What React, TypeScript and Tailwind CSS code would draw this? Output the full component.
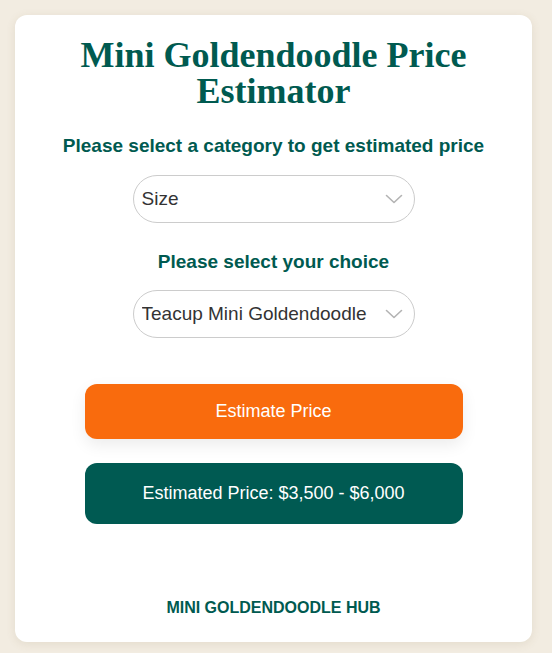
import { useState } from 'react'

const sizeChoices = [
  'Teacup Mini Goldendoodle',
  'Toy Mini Goldendoodle',
  'Petite Mini Goldendoodle',
  'Mini Goldendoodle',
]

function Chevron() {
  return (
    <svg width="18" height="10" viewBox="0 0 18 10" fill="none" className="pointer-events-none absolute right-[12px] top-1/2 -translate-y-1/2">
      <path d="M1.5 1.5 L9 8.5 L16.5 1.5" stroke="#b3b3b3" strokeWidth="1.6" strokeLinecap="round" strokeLinejoin="round" />
    </svg>
  )
}

function PillSelect({ value, options, onChange }: { value: string; options: string[]; onChange: (v: string) => void }) {
  return (
    <div className="relative w-[282px] h-[48px]">
      <select
        value={value}
        onChange={(e) => onChange(e.target.value)}
        className="appearance-none w-full h-full rounded-full border border-[#cccccc] bg-white pl-[8px] pr-[40px] text-[19px] text-[#333333] outline-none font-['Liberation_Sans',Arial,sans-serif]"
      >
        {options.map((o) => (
          <option key={o} value={o}>
            {o}
          </option>
        ))}
      </select>
      <Chevron />
    </div>
  )
}

export default function App() {
  const [category, setCategory] = useState('Size')
  const [choice, setChoice] = useState(sizeChoices[0])

  return (
    <div className="min-h-[653px] bg-[#f2ece1] p-[15px] font-['Liberation_Sans',Arial,sans-serif]">
      <div className="w-[517px] h-[627px] rounded-[12px] bg-white shadow-[0_2px_10px_rgba(120,100,60,0.12)] flex flex-col items-center pt-[22px]">
        <h1 className="text-center text-[36px] leading-[36px] font-bold text-[#005a50] font-['Liberation_Serif','Times_New_Roman',serif]">
          Mini Goldendoodle Price
          <br />
          Estimator
        </h1>

        <p className="mt-[23px] text-[19px] leading-[27px] font-bold text-[#005a50]">
          Please select a category to get estimated price
        </p>
        <div className="mt-[16px]">
          <PillSelect value={category} options={['Size', 'Color', 'Generation']} onChange={setCategory} />
        </div>

        <p className="mt-[25px] text-[19px] leading-[27px] font-bold text-[#005a50]">Please select your choice</p>
        <div className="mt-[15px]">
          <PillSelect value={choice} options={sizeChoices} onChange={setChoice} />
        </div>

        <button
          type="button"
          className="mt-[46px] w-[378px] h-[55px] rounded-[12px] bg-[#f96b0d] text-white text-[18px] shadow-[0_6px_16px_rgba(0,0,0,0.08)]"
        >
          Estimate Price
        </button>

        <div className="mt-[24px] w-[378px] h-[61px] rounded-[12px] bg-[#005a52] text-white text-[18px] flex items-center justify-center">
          Estimated Price: $3,500 - $6,000
        </div>

        <p className="mt-[74px] text-[16px] leading-[20px] font-bold text-[#005a50]">MINI GOLDENDOODLE HUB</p>
      </div>
    </div>
  )
}
